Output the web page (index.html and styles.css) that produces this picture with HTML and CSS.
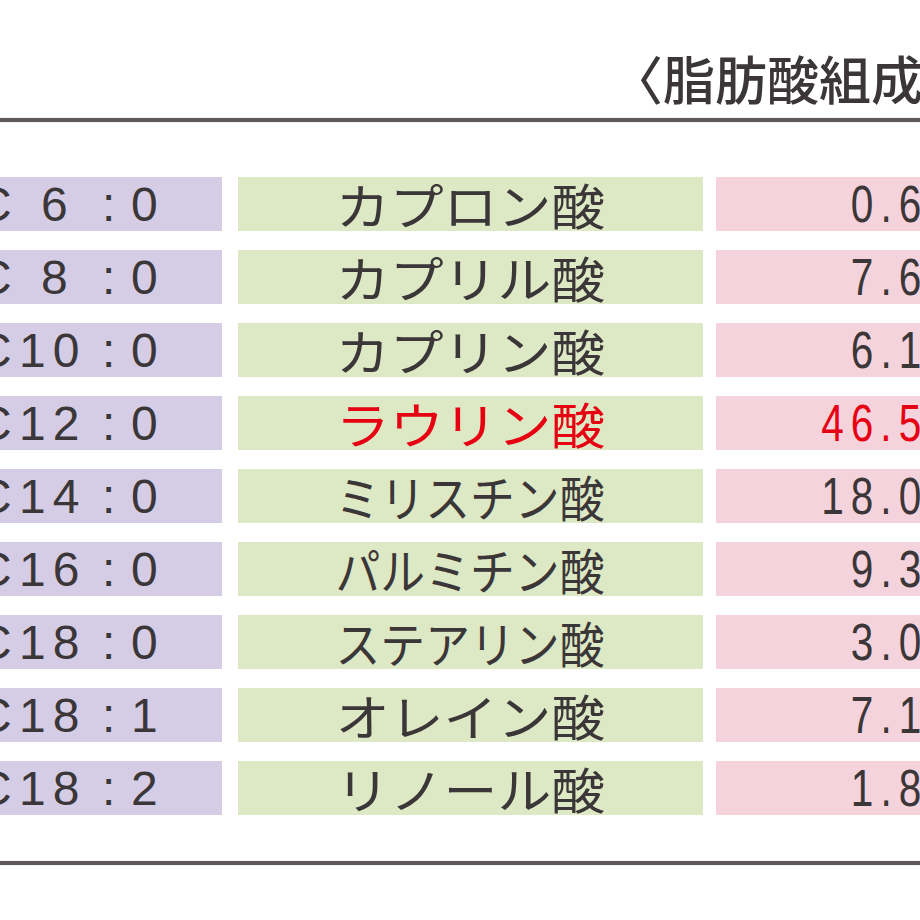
FILE: index.html
```html
<!DOCTYPE html>
<html lang="ja">
<head>
<meta charset="utf-8">
<link rel="stylesheet" href="styles.css">
</head>
<body>
<div class="page">
  <div class="title">〈脂肪酸組成〉</div>
  <div class="rule"></div>
  <div class="rows">
    <div class="row"><div class="code"><span class="c">C</span><span class="num one">6</span><span class="colon">:</span><span class="val">0</span></div><div class="name"><span class="jp five">カプロン酸</span></div><div class="pct"><span class="num-r">0.6</span></div></div>
    <div class="row"><div class="code"><span class="c">C</span><span class="num one">8</span><span class="colon">:</span><span class="val">0</span></div><div class="name"><span class="jp five">カプリル酸</span></div><div class="pct"><span class="num-r">7.6</span></div></div>
    <div class="row"><div class="code"><span class="c">C</span><span class="num">10</span><span class="colon">:</span><span class="val">0</span></div><div class="name"><span class="jp five">カプリン酸</span></div><div class="pct"><span class="num-r">6.1</span></div></div>
    <div class="row hl"><div class="code"><span class="c">C</span><span class="num">12</span><span class="colon">:</span><span class="val">0</span></div><div class="name"><span class="jp five">ラウリン酸</span></div><div class="pct"><span class="num-r">46.5</span></div></div>
    <div class="row"><div class="code"><span class="c">C</span><span class="num">14</span><span class="colon">:</span><span class="val">0</span></div><div class="name"><span class="jp six">ミリスチン酸</span></div><div class="pct"><span class="num-r">18.0</span></div></div>
    <div class="row"><div class="code"><span class="c">C</span><span class="num">16</span><span class="colon">:</span><span class="val">0</span></div><div class="name"><span class="jp six">パルミチン酸</span></div><div class="pct"><span class="num-r">9.3</span></div></div>
    <div class="row"><div class="code"><span class="c">C</span><span class="num">18</span><span class="colon">:</span><span class="val">0</span></div><div class="name"><span class="jp six">ステアリン酸</span></div><div class="pct"><span class="num-r">3.0</span></div></div>
    <div class="row"><div class="code"><span class="c">C</span><span class="num">18</span><span class="colon">:</span><span class="val">1</span></div><div class="name"><span class="jp five">オレイン酸</span></div><div class="pct"><span class="num-r">7.1</span></div></div>
    <div class="row"><div class="code"><span class="c">C</span><span class="num">18</span><span class="colon">:</span><span class="val">2</span></div><div class="name"><span class="jp five">リノール酸</span></div><div class="pct"><span class="num-r">1.8</span></div></div>
  </div>
  <div class="rule bottom"></div>
</div>
</body>
</html>
```
FILE: styles.css
```css
html, body {
  margin: 0;
  padding: 0;
  background: #ffffff;
  overflow: hidden;
  width: 920px;
  height: 920px;
}
.page {
  width: 1160px;
  margin-left: -60px;
  padding-top: 53px;
  color: #3b3637;
  font-family: "Liberation Sans", Arial, sans-serif;
}
.title {
  padding-left: 671px;
  font-family: "Noto Sans CJK JP", sans-serif;
  font-size: 52px;
  line-height: 50px;
  font-weight: 500;
  white-space: nowrap;
}
.rule {
  margin-top: 15px;
  height: 4px;
  background: #5e5859;
  box-shadow: 0 0 1px #9a9495;
}
.rule.bottom {
  margin-top: 46px;
}
.rows {
  margin-top: 55px;
  display: flex;
  flex-direction: column;
  gap: 19px;
}
.row {
  display: flex;
  height: 54px;
}
.code,
.name,
.pct {
  flex-shrink: 0;
}
.code {
  width: 282px;
  background: #d5cde6;
  display: flex;
  align-items: center;
  padding-left: 37px;
  box-sizing: border-box;
  font-size: 48px;
  white-space: nowrap;
}
.c {
  display: inline-block;
  width: 42px;
}
.num {
  display: inline-block;
  width: 68px;
  letter-spacing: 7px;
}
.num.one {
  padding-left: 22px;
  box-sizing: border-box;
}
.colon {
  display: inline-block;
  width: 44px;
  padding-left: 15px;
  box-sizing: border-box;
}
.name {
  width: 465px;
  margin-left: 16px;
  background: #dde8c5;
  display: flex;
  align-items: center;
  justify-content: center;
}
.jp {
  display: inline-block;
  font-family: "Noto Sans CJK JP", sans-serif;
  font-size: 49px;
  line-height: 54px;
  white-space: nowrap;
}
.jp.five { transform: scaleX(1.1); }
.jp.six { transform: scaleX(0.915); }
.pct {
  width: 400px;
  margin-left: 13px;
  background: #f5d3dc;
  display: flex;
  align-items: center;
  justify-content: flex-end;
  padding-right: 188px;
  box-sizing: border-box;
}
.num-r {
  display: inline-block;
  font-size: 52px;
  letter-spacing: 9px;
  transform: scaleX(0.78);
  transform-origin: right center;
  white-space: nowrap;
}
.row.hl .jp,
.row.hl .num-r {
  color: #e60012;
}
```
